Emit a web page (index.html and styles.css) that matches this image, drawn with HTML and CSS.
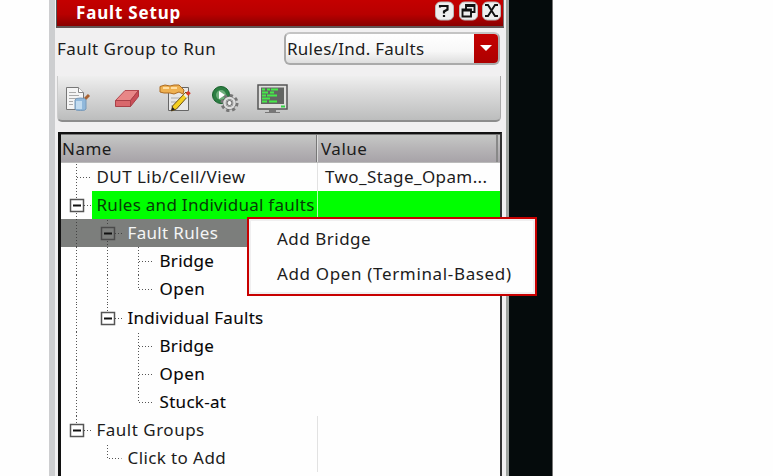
FILE: index.html
```html
<!DOCTYPE html>
<html lang="en">
<head>
<meta charset="utf-8">
<title>Fault Setup</title>
<link rel="stylesheet" href="styles.css">
</head>
<body>
<div class="screen">
  <main class="dock">
    <header class="titlebar">
      <h1><span class="t-title">Fault Setup</span></h1>
      <div class="winbtns">
        <svg viewBox="0 0 19 19"><rect x=".5" y=".5" width="18" height="18" rx="5"/><path d="M5 6V4.500h7.500V8L9 10v2M9 13.500v2" class="thick"/></svg>
        <svg viewBox="0 0 19 19"><rect x=".5" y=".5" width="18" height="18" rx="5"/><path d="M7 7V3.500h8.500v7H12M7 4.500h8M3.500 8H12v7H3.500zM3.500 9H12"/></svg>
        <svg viewBox="0 0 19 19"><rect x=".5" y=".5" width="18" height="18" rx="5"/><path d="M3 3.500h3l7 11h3M16 3.500h-3l-7 11H3"/></svg>
      </div>
    </header>
    <div class="runrow">
      <label class="t-run">Fault Group to Run</label>
      <div class="combo"><span class="t-combo">Rules/Ind. Faults</span><i><svg width="12" height="7" viewBox="0 0 12 7"><path d="M0 0h12L6 6z" fill="#fff"/></svg></i></div>
    </div>
    <div class="toolbar">
      <svg width="28" height="26" viewBox="0 0 28 26"><path d="M2.500 1.500h12l5 5v17h-17z" fill="#f4f4f4" stroke="#777"/><path d="M14.500 1.500v5h5" fill="#fff" stroke="#888"/><path d="M5 6.500h7M5 9.500h10M5 12.500h8M5 15.500h4M5 18.500h4" stroke="#aaa"/><path d="M21 13l4-4" stroke="#a86232" stroke-width="3"/><path d="M11 14q0-2 5.500-2t5.500 2v9q0 1.500-5.500 1.500T11 23z" fill="#91b9dc" stroke="#7899b8"/><path d="M12 15h6v8h-6z" fill="#c3dcf0"/></svg>
      <svg width="26" height="20" viewBox="0 0 26 20"><path d="M1.500 11.500L11 1.500h13.500l-8 10z" fill="#e88787" stroke="#b44a50"/><path d="M1.500 11.500h15v6h-15z" fill="#d9686c" stroke="#a94148"/><path d="M16.500 11.500l8-10v6l-8 10z" fill="#c94e57" stroke="#a94148"/></svg>
      <svg width="32" height="30" viewBox="0 0 32 30"><path d="M9.500 3.500h20v23h-20z" fill="#e7e7e7" stroke="#666"/><path d="M12 14h9M12 18h6M12 22h4" stroke="#aaa"/><path d="M1 2.500L6 1l5 1 4-1h5l5 5-1 4-4-2-5 2-4-1H5l-4-1z" fill="#eeb050" stroke="#ad6b20"/><path d="M4 4h6M12 4h6" stroke="#ffdda0" stroke-width="2"/><path d="M13.500 22L27 8l3 3-12.500 14-5 2z" fill="#f4cf21" stroke="#694d14"/><path d="M25.500 10l3 3" stroke="#eee" stroke-width="2.500"/><path d="M28 8l2.500 2.500" stroke="#d53b2d" stroke-width="3.500"/><path d="M12 27l1.500-4 2.500 2.500z" fill="#222"/></svg>
      <svg width="28" height="28" viewBox="0 0 28 28"><circle cx="10" cy="10" r="8.500" fill="#2c7e42" stroke="#17602b"/><circle cx="10" cy="10" r="5" fill="#6dae7b"/><path d="M8 6l6 4-6 4z" fill="#fff"/><circle cx="18.500" cy="18" r="7" fill="none" stroke="#777" stroke-width="4" stroke-dasharray="3 2.500"/><circle cx="18.500" cy="18" r="5" fill="#d8d8d8" stroke="#666" stroke-width="3.500"/><circle cx="18.500" cy="18" r="5" fill="none" stroke="#ddd" stroke-width="2.500"/><circle cx="18.500" cy="18" r="2.500" fill="#eee" stroke="#666"/></svg>
      <svg width="31" height="30" viewBox="0 0 31 30"><path d="M1 1h29v24H1z" fill="#dededc" stroke="#555" stroke-width="1.500"/><path d="M4 3.500h23V20H4z" fill="#626562"/><path d="M5 5.500h3M10 5.500h3M14 5.500h7M5 8.500h6M13 8.500h4M5 11.500h4M10 11.500h10M5 14.500h8M5 17.500h5M12 17.500h8" stroke="#45eb49" stroke-width="1.800"/><path d="M24 22.500h4" stroke="#35d447" stroke-width="2"/><path d="M12 26h7v2h4v1H8v-1h4z" fill="#777"/></svg>
    </div>
    <section class="tree">
      <div class="head"><span><b class="t-name">Name</b></span><span><b class="t-value">Value</b></span></div>
      <div class="row"><div class="cell"><svg class="l0"><path d="M16.500 1v28M17 14.500h14"/></svg><span class="t0">DUT Lib/Cell/View</span></div><div class="val"><span class="t-two">Two_Stage_Opam...</span></div></div>
      <div class="row green"><div class="cell"><svg class="l0"><path d="M16.500 0v7M16.500 22v6M24 14.500h7"/><rect x="10.500" y="8.500" width="13" height="12"/><path class="minus" d="M13 14.500h8"/></svg><span class="t1">Rules and Individual faults</span></div><div class="val"></div></div>
      <div class="row selected"><div class="cell"><svg class="l1"><path d="M16.500 0v28M47.500 1v6M47.500 22v6M55 14.500h7"/><rect x="41.500" y="8.500" width="13" height="12"/><path class="minus" d="M44 14.500h8"/></svg><span class="t2">Fault Rules</span></div><div class="val"></div></div>
      <div class="row strong"><div class="cell"><svg class="l2"><path d="M16.500 0v28M47.500 0v28M78.500 0v28M79 14.500h14"/></svg><span class="t3">Bridge</span></div></div>
      <div class="row strong"><div class="cell"><svg class="l2"><path d="M16.500 0v28M47.500 0v28M78.500 0v14.500h14"/></svg><span class="t4">Open</span></div></div>
      <div class="row strong"><div class="cell"><svg class="l1"><path d="M16.500 0v28M47.500 0v7M55 14.500h7"/><rect x="41.500" y="8.500" width="13" height="12"/><path class="minus" d="M44 14.500h8"/></svg><span class="t5">Individual Faults</span></div></div>
      <div class="row strong"><div class="cell"><svg class="l2"><path d="M16.500 0v28M78.500 1v27M79 14.500h14"/></svg><span class="t3">Bridge</span></div></div>
      <div class="row strong"><div class="cell"><svg class="l2"><path d="M16.500 0v28M78.500 0v28M79 14.500h14"/></svg><span class="t4">Open</span></div></div>
      <div class="row strong"><div class="cell"><svg class="l2"><path d="M16.500 0v28M78.500 0v14.500h14"/></svg><span class="t6">Stuck-at</span></div></div>
      <div class="row"><div class="cell"><svg class="l0"><path d="M16.500 0v7M24 14.500h7"/><rect x="10.500" y="8.500" width="13" height="12"/><path class="minus" d="M13 14.500h8"/></svg><span class="t7">Fault Groups</span></div><div class="val"></div></div>
      <div class="row"><div class="cell"><svg class="l1"><path d="M47.500 1v13.500h14"/></svg><span class="t8">Click to Add</span></div><div class="val"></div></div>
    </section>
  </main>
  <div class="backdrop"></div>
  <div class="menu"><div><span class="m1">Add Bridge</span></div><div><span class="m2">Add Open (Terminal-Based)</span></div></div>
</div>
</body>
</html>
```
FILE: styles.css
```css
* { box-sizing: border-box; }
body { margin: 0; background: #fefefe; font: 17px/28px "Noto Sans", sans-serif; color: #1c1c1c; overflow: hidden; }
.screen { position: relative; display: flex; width: 773px; height: 476px; padding-left: 49px; overflow: hidden; }
span, label, b { white-space: nowrap; }
.dock { width: 460px; background: #f1f0f1; border-left: 6px solid #cdced0; border-right: 3px solid #9fa4a0; display: flex; flex-direction: column; }
.titlebar { height: 28px; margin: 0 2px 0 1px; padding: 0 2px 0 19px; display: flex; justify-content: space-between; background: linear-gradient(#c40000, #b80000 55%, #890000); border-left: 1px solid #555; border-bottom: 2px solid #625555; border-right: 1px solid #777; color: #fff; }
h1 { margin: 0; font: bold 17px/26px "Noto Sans", sans-serif; letter-spacing: .82px; }
.winbtns { display: flex; gap: 4.500px; padding-top: 1px; }
.winbtns svg { width: 19px; height: 20px; }
.winbtns rect { fill: #eee; stroke: #bbb; }
.winbtns path { fill: none; stroke: #111; stroke-width: 1.900; }
.winbtns .thick { stroke-width: 2.200; }
.runrow { height: 48px; display: flex; justify-content: space-between; padding: 4px 6px 0 2px; }
.t-run { line-height: 34px; letter-spacing: .46px; }
.t-combo { letter-spacing: .27px; }
.combo { width: 216px; height: 33px; border: 2px solid #aaa; border-top-color: #c4c4c4; border-radius: 6px; display: flex; justify-content: space-between; background: linear-gradient(#fff, #f7f7f7 60%, #dedede); line-height: 29px; padding-left: 1px; overflow: hidden; }
.combo i { width: 24px; background: linear-gradient(#c50000, #ad0000); display: flex; align-items: center; justify-content: center; }
.toolbar { height: 46px; margin: 0 5px 0 2px; border-bottom: 2px solid #8d8d8d; border-left: 1px solid #ccc; border-right: 1px solid #aaa; border-radius: 0 0 5px 5px; background: linear-gradient(#efefef, #dcdcdc 35%, #bcbdbd); display: flex; align-items: center; padding: 1px 0 0 6px; }
.toolbar svg { flex: none; }
.toolbar svg:nth-child(1) { margin-right: 22px; }
.toolbar svg:nth-child(2) { margin-right: 19px; }
.toolbar svg:nth-child(3) { margin-right: 20px; }
.toolbar svg:nth-child(4) { margin-right: 18px; }
.tree { margin: 10px 4px 0 3px; flex: none; height: 344px; border: 2px solid #111; border-left-width: 3px; border-right-color: #333; border-bottom: 0; background: #fefefe; overflow: hidden; }
.head { display: flex; height: 29px; background: linear-gradient(#c6c8c6, #b6b4b6 50%, #a7a3a8); border-top: 1px solid #777; border-bottom: 1px solid #bbb; line-height: 27px; }
.head span:first-child { width: 256px; padding-left: 1px; border-right: 1px solid #777; box-shadow: 1px 0 #ddd; }
.head span:last-child { flex: 1; padding-left: 4px; margin-right: 2px; border-right: 2px solid #888; }
.head b { font-weight: 400; letter-spacing: .5px; }
.row { display: flex; height: 28.120px; }
.cell { width: 256px; display: flex; flex: none; }
.val { flex: 1; border-left: 1px solid #e2e2e2; padding-left: 7px; }
.row svg { height: 28.120px; flex: none; margin-left: -1px; }
.row path { fill: none; stroke: #555; stroke-width: 1; stroke-dasharray: 1 2; }
.row rect { fill: #fff; stroke: #555; stroke-width: 1.500; }
.row .minus { stroke: #111; stroke-width: 2; stroke-dasharray: none; }
.l0 { width: 36.500px; }
.l1 { width: 67.500px; }
.l2 { width: 99.500px; }
.t0 { letter-spacing: .45px; }
.t1 { letter-spacing: .28px; }
.t2 { letter-spacing: .33px; }
.t3, .t5, .t6 { letter-spacing: .3px; }
.t4 { letter-spacing: .5px; }
.t7, .m1 { letter-spacing: .5px; }
.t8, .t-two { letter-spacing: .4px; }
.m2 { letter-spacing: .65px; }
.green { background: linear-gradient(90deg, #fefefe 31px, #00ff00 31px); color: #073b07; }
.green .val { border-color: #b2ffb2; }
.selected { background: #7c7e7c; color: #f4f5f5; }
.selected rect { fill: #7c7e7c; stroke: #4b4b4b; }
.selected path { stroke: #444; }
.strong { color: #060606; -webkit-text-stroke: .1px #060606; }
.backdrop { width: 44px; background: #050b0c; border-right: 1px solid #777; }
.menu { position: absolute; left: 247px; top: 217px; width: 290px; height: 79px; background: #fefefe; border: 2px solid #c80000; box-shadow: inset 0 0 0 2px #f0eff0; padding: 3px 0 0 28px; line-height: 34.500px; }
```
